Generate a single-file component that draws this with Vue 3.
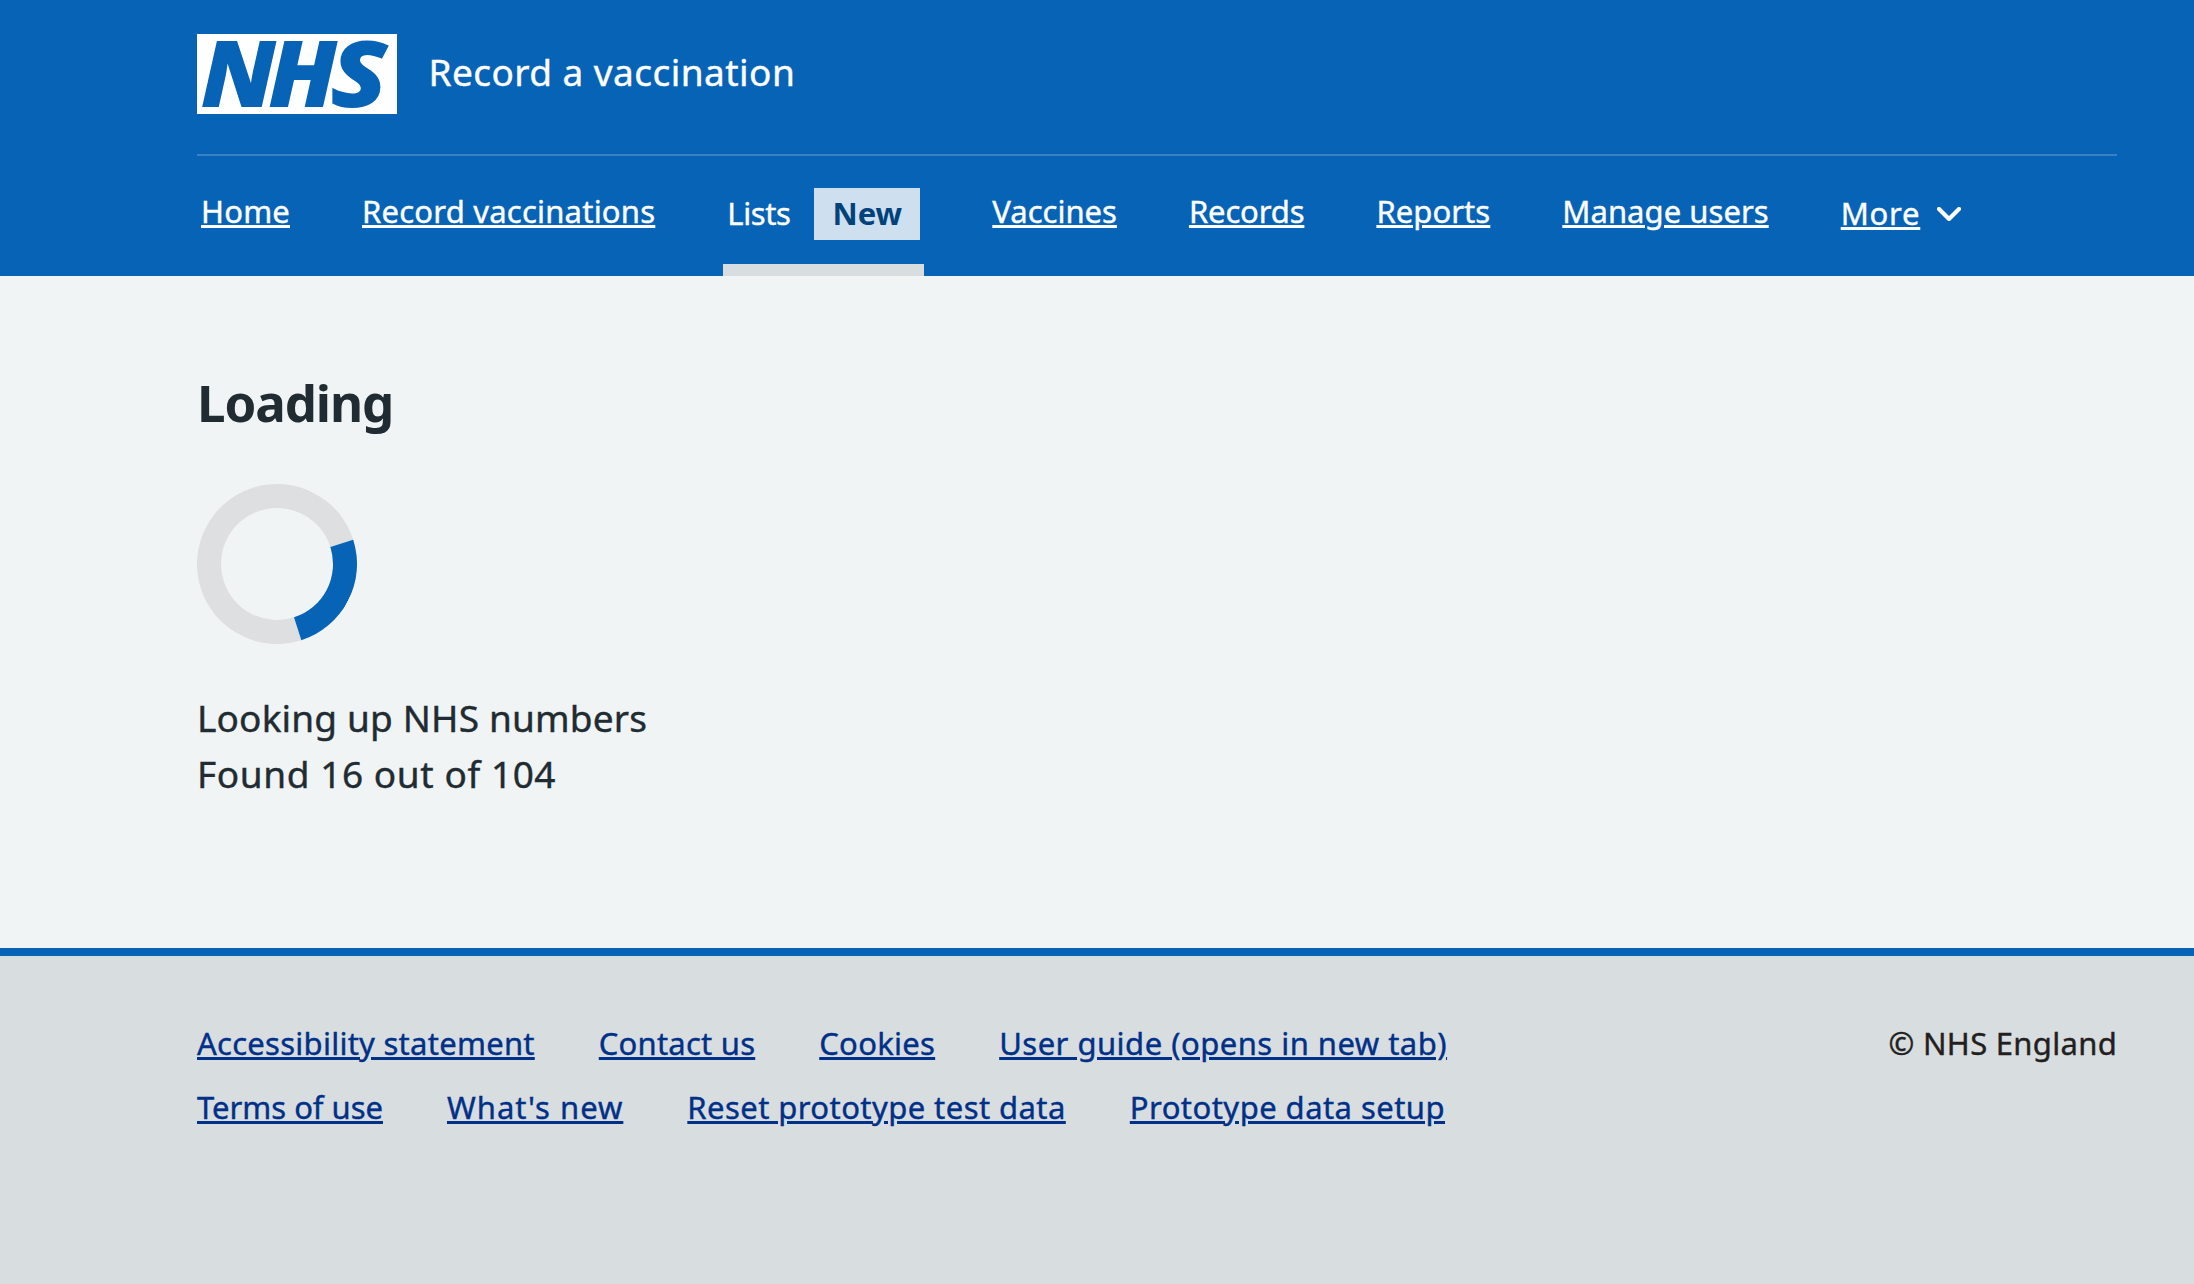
<script setup>
const navBefore = [
  { label: 'Home', track: 0.2 },
  { label: 'Record vaccinations', track: 0.22 },
]
const navAfter = [
  { label: 'Vaccines', track: 0 },
  { label: 'Records', track: -0.15 },
  { label: 'Reports', track: 0.07 },
  { label: 'Manage users', track: 0.05 },
]
const footerRows = [
  [
    { label: 'Accessibility statement', track: 0.26 },
    { label: 'Contact us', track: 0.22 },
    { label: 'Cookies', track: 0.28 },
    { label: 'User guide (opens in new tab)', track: 0.48 },
  ],
  [
    { label: 'Terms of use', track: -0.02 },
    { label: "What's new", track: 0.98 },
    { label: 'Reset prototype test data', track: 0.43 },
    { label: 'Prototype data setup', track: 0.455 },
  ],
]
</script>

<template>
  <div class="page">
    <header class="header">
      <div class="container">
        <a class="brand" href="#">
          <svg class="logo" viewBox="0 0 200 80" role="img" aria-label="NHS">
            <rect width="200" height="80" fill="#fff" />
            <g class="logo-letters">
              <text transform="translate(4.5 71.5) scale(1.07 1)">N</text>
              <text transform="translate(72 71.5) scale(1.07 1)">H</text>
              <text transform="translate(134.5 71.5) scale(1.15 1)">S</text>
            </g>
          </svg>
          <span class="service">Record a vaccination</span>
        </a>
        <nav class="nav">
          <a
            v-for="item in navBefore"
            :key="item.label"
            class="nav-link"
            href="#"
            :style="{ letterSpacing: item.track + 'px' }"
            >{{ item.label }}</a
          >
          <a class="nav-link current" href="#">
            <span class="current-label">Lists</span>
            <strong class="tag">New</strong>
          </a>
          <a
            v-for="item in navAfter"
            :key="item.label"
            class="nav-link"
            href="#"
            :style="{ letterSpacing: item.track + 'px' }"
            >{{ item.label }}</a
          >
          <button class="nav-link more" type="button">
            <span class="more-label">More</span>
            <svg class="chevron" viewBox="0 0 24 14">
              <path d="M2 2l10 10L22 2" />
            </svg>
          </button>
        </nav>
      </div>
    </header>

    <main class="container main">
      <h1>Loading</h1>
      <div class="spinner"></div>
      <p class="status">Looking up NHS numbers</p>
      <p class="status found">Found 16 out of 104</p>
    </main>

    <footer class="footer">
      <div class="container footer-inner">
        <div>
          <div v-for="(row, i) in footerRows" :key="i" class="footer-row">
            <a
              v-for="item in row"
              :key="item.label"
              href="#"
              :style="{ letterSpacing: item.track + 'px' }"
              >{{ item.label }}</a
            >
          </div>
        </div>
        <p class="copyright">© NHS England</p>
      </div>
    </footer>
  </div>
</template>

<style>
body {
  background: #d8dde0;
}
</style>

<style scoped>
.page {
  display: flex;
  flex-direction: column;
  height: 1284px;
  overflow: hidden;
  background: #f0f4f5;
  color: #212b32;
  font-family: 'Noto Sans', 'Open Sans', sans-serif;
  font-size: 31px;
  -webkit-text-stroke: 0.4px currentColor;
}
.container {
  box-sizing: border-box;
  width: 1920px;
  margin-left: 197px;
}
.header {
  height: 276px;
  background: #0763b6;
  color: #fff;
}
.header .container {
  padding-top: 34px;
}
.brand {
  display: flex;
  height: 120px;
  color: #fff;
  text-decoration: none;
}
.logo {
  width: 200px;
  height: 80px;
  overflow: visible;
}
.logo-letters {
  fill: #0763b6;
  stroke: #0763b6;
  stroke-width: 2;
  font-size: 88.5px;
  font-weight: 800;
  font-style: italic;
  -webkit-text-stroke: 2px #0763b6;
}
.service {
  margin-left: 31.5px;
  font-size: 37px;
  line-height: 76px;
  letter-spacing: 0.45px;
}
.nav {
  display: flex;
  gap: 64px;
  height: 120px;
  border-top: 2px solid rgba(255, 255, 255, 0.2);
}
.nav-link {
  box-sizing: border-box;
  height: 120px;
  padding: 31px 4px 0;
  color: #fff;
  line-height: 48px;
  white-space: nowrap;
  text-decoration: underline;
  text-decoration-thickness: 3px;
  text-underline-offset: 2px;
}
.current {
  display: flex;
  justify-content: space-between;
  width: 201px;
  border-bottom: 12px solid #d8dde0;
  text-decoration: none;
}
.current-label {
  padding-top: 2px;
  letter-spacing: -0.4px;
}
.tag {
  width: 106px;
  height: 52px;
  margin-top: 1px;
  background: #cedff0;
  color: #00437b;
  font-weight: 700;
  line-height: 50px;
  text-align: center;
  -webkit-text-stroke: 0;
}
.more {
  display: flex;
  gap: 17px;
  padding-top: 33px;
  border: 0;
  background: none;
  font: inherit;
  line-height: 48px;
  text-decoration: none;
}
.more-label {
  letter-spacing: 0.75px;
  text-decoration: underline;
  text-decoration-thickness: 3px;
  text-underline-offset: 2px;
}
.chevron {
  width: 24px;
  height: 14px;
  margin-top: 18px;
  fill: none;
  stroke: #fff;
  stroke-width: 4.2;
  stroke-linecap: round;
  stroke-linejoin: round;
}
.main {
  height: 672px;
  padding-top: 96px;
}
h1 {
  margin: 0 0 52px;
  font-size: 51px;
  font-weight: 700;
  line-height: 60px;
  letter-spacing: -1.1px;
  -webkit-text-stroke: 0;
}
.spinner {
  box-sizing: border-box;
  width: 160px;
  height: 160px;
  margin-bottom: 46px;
  border: 24px solid #dedfe1;
  border-right-color: #0763b6;
  border-radius: 50%;
  transform: rotate(27.3deg);
}
.status {
  margin: 0;
  font-size: 37px;
  line-height: 56px;
  letter-spacing: 0.17px;
}
.found {
  letter-spacing: 0.58px;
}
.footer {
  flex: 1;
  border-top: 8px solid #0763b6;
  background: #d8dde0;
}
.footer-inner {
  display: flex;
  justify-content: space-between;
  padding-top: 55px;
  line-height: 64px;
}
.footer-row {
  display: flex;
  gap: 64px;
}
.footer-row a {
  color: #003087;
  text-decoration: underline;
  text-decoration-thickness: 3px;
  text-underline-offset: 2px;
}
.copyright {
  margin: 0;
  color: #231f20;
  letter-spacing: 0.3px;
}
</style>
